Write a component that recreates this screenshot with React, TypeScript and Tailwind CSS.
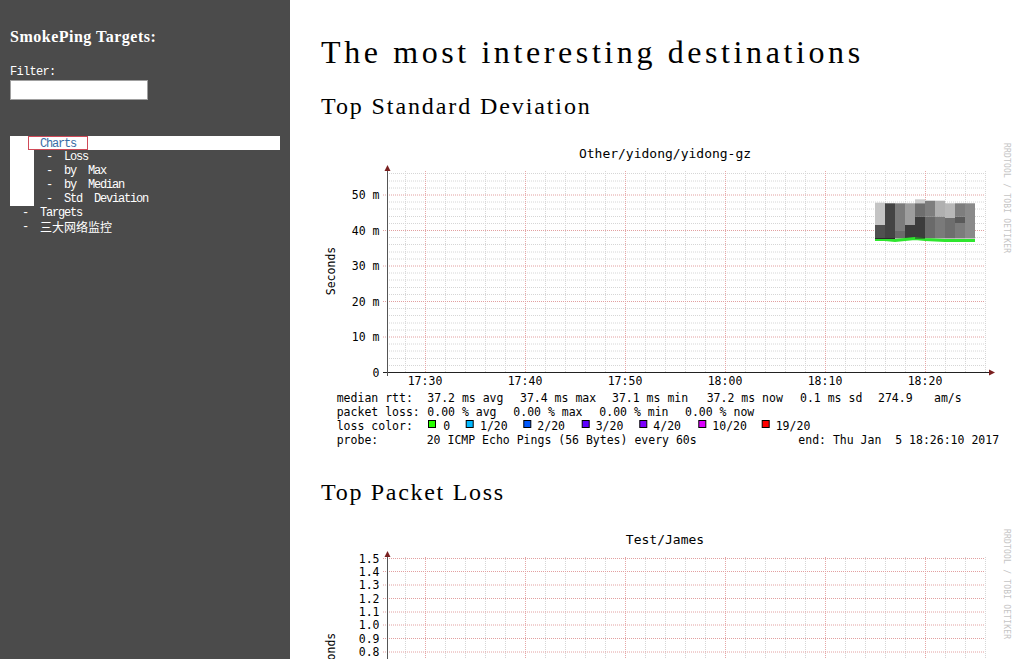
import React from 'react';

type Layer = [number, number, string];

const mono = 'DejaVu Sans Mono, monospace';

// smoke columns for the yidong-gz graph (x start, layers top->bottom)
const smoke: { x: number; layers: Layer[] }[] = [
  { x: 555, layers: [[66.7, 89, '#c4c4c4'], [89, 102.5, '#505050']] },
  { x: 565, layers: [[67.3, 102.5, '#444444']] },
  { x: 575, layers: [[67.3, 95, '#7c7c7c'], [95, 102.5, '#6a6a6a']] },
  { x: 585, layers: [[67.3, 89, '#9e9e9e'], [89, 102.5, '#3c3c3c']] },
  { x: 595, layers: [[63.3, 67.3, '#cccccc'], [67.3, 80.7, '#6e6e6e'], [80.7, 102.5, '#3c3c3c']] },
  { x: 605, layers: [[64.7, 80.7, '#7e7e7e'], [80.7, 102.5, '#6a6a6a']] },
  { x: 615, layers: [[64.7, 80.7, '#b0b0b0'], [80.7, 102.5, '#7a7a7a']] },
  { x: 625, layers: [[67.3, 82, '#b8b8b8'], [82, 102.5, '#6e6e6e']] },
  { x: 635, layers: [[67.3, 80.7, '#7e7e7e'], [80.7, 87, '#5a5a5a'], [87, 102.5, '#7c7c7c']] },
  { x: 645, layers: [[67.3, 102.5, '#8a8a8a']] },
];

const lossColors: { bx: number; tx: number; c: string; t: string }[] = [
  { bx: 108, tx: 123.3, c: '#26ff00', t: '0' },
  { bx: 145.7, tx: 160, c: '#00b8ff', t: '1/20' },
  { bx: 203.3, tx: 217.3, c: '#0059ff', t: '2/20' },
  { bx: 261.7, tx: 275.7, c: '#5e00ff', t: '3/20' },
  { bx: 319.3, tx: 333.3, c: '#7e00ff', t: '4/20' },
  { bx: 378.3, tx: 392.3, c: '#dd00ff', t: '10/20' },
  { bx: 441.7, tx: 455.7, c: '#ff0000', t: '19/20' },
];

const timeLabels = ['17:30', '17:40', '17:50', '18:00', '18:10', '18:20'];

interface ChartProps {
  title: string;
  yTicks: { y: number; label: string; major: boolean }[];
  withData?: boolean;
  height?: number;
}

const Chart: React.FC<ChartProps> = ({ title, yTicks, withData, height = 340 }) => {
  const vMinor: number[] = [];
  for (let x = 85; x <= 665; x += 20) if ((x - 105) % 100 !== 0) vMinor.push(x);
  const vMajor = [105, 205, 305, 405, 505, 605];
  const showBottom = height > 250;

  return (
    <svg width={697} height={height} className="block -ml-px shrink-0" fontFamily={mono}>
      <rect x={0} y={0} width={697} height={height} fill="#ffffff" />
      <text x={345} y={22} fontSize={13} textAnchor="middle" fill="#000">{title}</text>

      {/* grid */}
      {yTicks.filter(t => !t.major).map((t, i) => (
        <line key={'hm' + i} x1={67} x2={665} y1={t.y} y2={t.y} stroke="#d6d6d6" strokeWidth={1} strokeDasharray="1 1" />
      ))}
      {vMinor.map(x => (
        <line key={'vm' + x} x1={x + 0.5} x2={x + 0.5} y1={35} y2={236} stroke="#d6d6d6" strokeWidth={1} strokeDasharray="1 1" />
      ))}
      {vMajor.map(x => (
        <line key={'vM' + x} x1={x + 0.5} x2={x + 0.5} y1={35} y2={236} stroke="#e6a6a6" strokeWidth={1} strokeDasharray="1 1" />
      ))}
      {yTicks.filter(t => t.major).map((t, i) => (
        <line key={'hM' + i} x1={63} x2={665} y1={t.y} y2={t.y} stroke="#e2a0a0" strokeWidth={1} strokeDasharray="1 1" />
      ))}

      {withData && (
        <g>
          {smoke.map(col =>
            col.layers.map((l, i) => (
              <rect key={col.x + '-' + i} x={col.x} y={l[0]} width={10} height={l[1] - l[0]} fill={l[2]} />
            ))
          )}
          <polyline
            points="555,103.5 565,103.5 575,104.5 585,103.5 595,102.5 605,103.5 615,104 625,104.5 655,104.5"
            fill="none"
            stroke="#2ee62e"
            strokeWidth={3}
          />
          <line x1={555} x2={575} y1={102.5} y2={102.5} stroke="#2a2a2a" strokeWidth={1} />
          <line x1={595} x2={605} y1={102} y2={102} stroke="#2a2a2a" strokeWidth={1} />
        </g>
      )}

      {/* axes */}
      <line x1={63} x2={670} y1={236.5} y2={236.5} stroke="#222" strokeWidth={1} />
      <line x1={67.5} x2={67.5} y1={33} y2={240} stroke="#555" strokeWidth={1} />
      <polygon points="64.5,35 70.5,35 67.5,29" fill="#7a2020" />
      <polygon points="669,233.5 669,239.5 675,236.5" fill="#7a2020" />

      {/* y labels */}
      {yTicks.filter(t => t.label && t.y + 4 < height + 3).map((t, i) => (
        <text key={'yl' + i} x={59.5} y={t.y + 4} fontSize={11.5} textAnchor="end" fill="#000">{t.label}</text>
      ))}
      {/* x labels */}
      {showBottom && timeLabels.map((l, i) => (
        <text key={l} x={105 + i * 100} y={249} fontSize={11.5} textAnchor="middle" fill="#000">{l}</text>
      ))}

      <text transform="translate(15,135) rotate(-90)" fontSize={11.5} textAnchor="middle" fill="#000">Seconds</text>
      <text transform="translate(684,7) rotate(90)" fontSize={8} letterSpacing={0.2} fill="#c4c4c4">RRDTOOL / TOBI OETIKER</text>

      {withData && (
        <g fontSize={11.5} fill="#000">
          <text x={16.7} y={265.5}>median rtt:</text>
          <text x={107.3} y={265.5}>37.2 ms avg</text>
          <text x={200} y={265.5}>37.4 ms max</text>
          <text x={292} y={265.5}>37.1 ms min</text>
          <text x={386.7} y={265.5}>37.2 ms now</text>
          <text x={480} y={265.5}>0.1 ms sd</text>
          <text x={558} y={265.5}>274.9</text>
          <text x={614} y={265.5}>am/s</text>

          <text x={16.7} y={279.5}>packet loss:</text>
          <text x={107.3} y={279.5}>0.00 % avg</text>
          <text x={193.3} y={279.5}>0.00 % max</text>
          <text x={279.3} y={279.5}>0.00 % min</text>
          <text x={365} y={279.5}>0.00 % now</text>

          <text x={16.7} y={293.5}>loss color:</text>
          {lossColors.map(lc => (
            <g key={lc.t}>
              <rect x={lc.bx + 0.5} y={284.5} width={7} height={7} fill={lc.c} stroke="#000" strokeWidth={1} />
              <text x={lc.tx} y={293.5}>{lc.t}</text>
            </g>
          ))}

          <text x={16.7} y={307.5}>probe:</text>
          <text x={106.7} y={307.5}>20 ICMP Echo Pings (56 Bytes) every 60s</text>
          <text x={478.3} y={307.5} xmlSpace="preserve">end: Thu Jan  5 18:26:10 2017</text>
        </g>
      )}
    </svg>
  );
};

const msTicks = Array.from({ length: 29 }, (_, k) => ({
  y: Math.round((236.5 - k * 7.1) * 2) / 2,
  label: k % 5 === 0 ? (k === 0 ? '0' : `${k * 2} m`) : '',
  major: k % 5 === 0 && k > 0,
}));

const lossTicks = Array.from({ length: 16 }, (_, k) => ({
  y: Math.round((236.5 - k * 13.34) * 2) / 2,
  label: (k / 10).toFixed(1),
  major: k > 0,
}));

const menuFont = "font-['Liberation_Mono',monospace] text-[12px] tracking-[-1.2px] leading-[14px] whitespace-pre";

export default function App() {
  return (
    <div className="flex h-[659px] w-full overflow-hidden bg-white text-black">
      {/* Sidebar */}
      <aside className="w-[290px] shrink-0 bg-[#4b4b4b] pl-[10px] pt-[27px] text-white">
        <h3 className="font-['Liberation_Serif',serif] text-[16px] font-bold leading-[20px] tracking-[0.5px]">SmokePing Targets:</h3>
        <div className="mt-[18px] font-['Liberation_Mono',monospace] text-[12px] leading-[14px] tracking-[-0.7px]">Filter:</div>
        <div className="mt-px h-[20px] w-[138px] border border-[#a0a0a0] bg-white" />

        <div className="mt-[36px] w-[270px] bg-white">
          <div className="flex h-[14px]">
            <div className={`ml-[18px] h-[14px] w-[60px] border border-[#d04a58] pl-[11px] text-[#3a6ea6] ${menuFont} leading-[12px]`}>Charts</div>
          </div>
          <div className="ml-[24px] bg-[#4b4b4b] pl-[12px] text-white">
            <div className={menuFont}>-  Loss</div>
            <div className={menuFont}>-  by  Max</div>
            <div className={menuFont}>-  by  Median</div>
            <div className={menuFont}>-  Std  Deviation</div>
          </div>
        </div>
        <div className="pl-[12px]">
          <div className={menuFont}>-  Targets</div>
          <div className="flex h-[14px] items-center">
            <span className={menuFont}>-  </span>
            <span className="font-['Noto_Sans_CJK_SC',sans-serif] text-[12px] leading-[14px]">三大网络监控</span>
          </div>
        </div>
      </aside>

      {/* Main */}
      <main className="flex min-w-0 flex-1 flex-col pl-[31px] pt-[32px]">
        <h1 className="font-['Liberation_Serif',serif] text-[32px] font-normal leading-[40px] tracking-[3.6px] whitespace-nowrap">
          The most interesting destinations
        </h1>
        <h2 className="mt-[19px] font-['Liberation_Serif',serif] text-[24px] font-normal leading-[30px] tracking-[1.9px] whitespace-nowrap">
          Top Standard Deviation
        </h2>
        <div className="mt-[15px]">
          <Chart title="Other/yidong/yidong-gz" yTicks={msTicks} withData />
        </div>
        <h2 className="mt-px font-['Liberation_Serif',serif] text-[24px] font-normal leading-[30px] tracking-[1.7px] whitespace-nowrap">
          Top Packet Loss
        </h2>
        <div className="mt-[15px]">
          <Chart title="Test/James" yTicks={lossTicks} height={137} />
        </div>
      </main>
    </div>
  );
}
